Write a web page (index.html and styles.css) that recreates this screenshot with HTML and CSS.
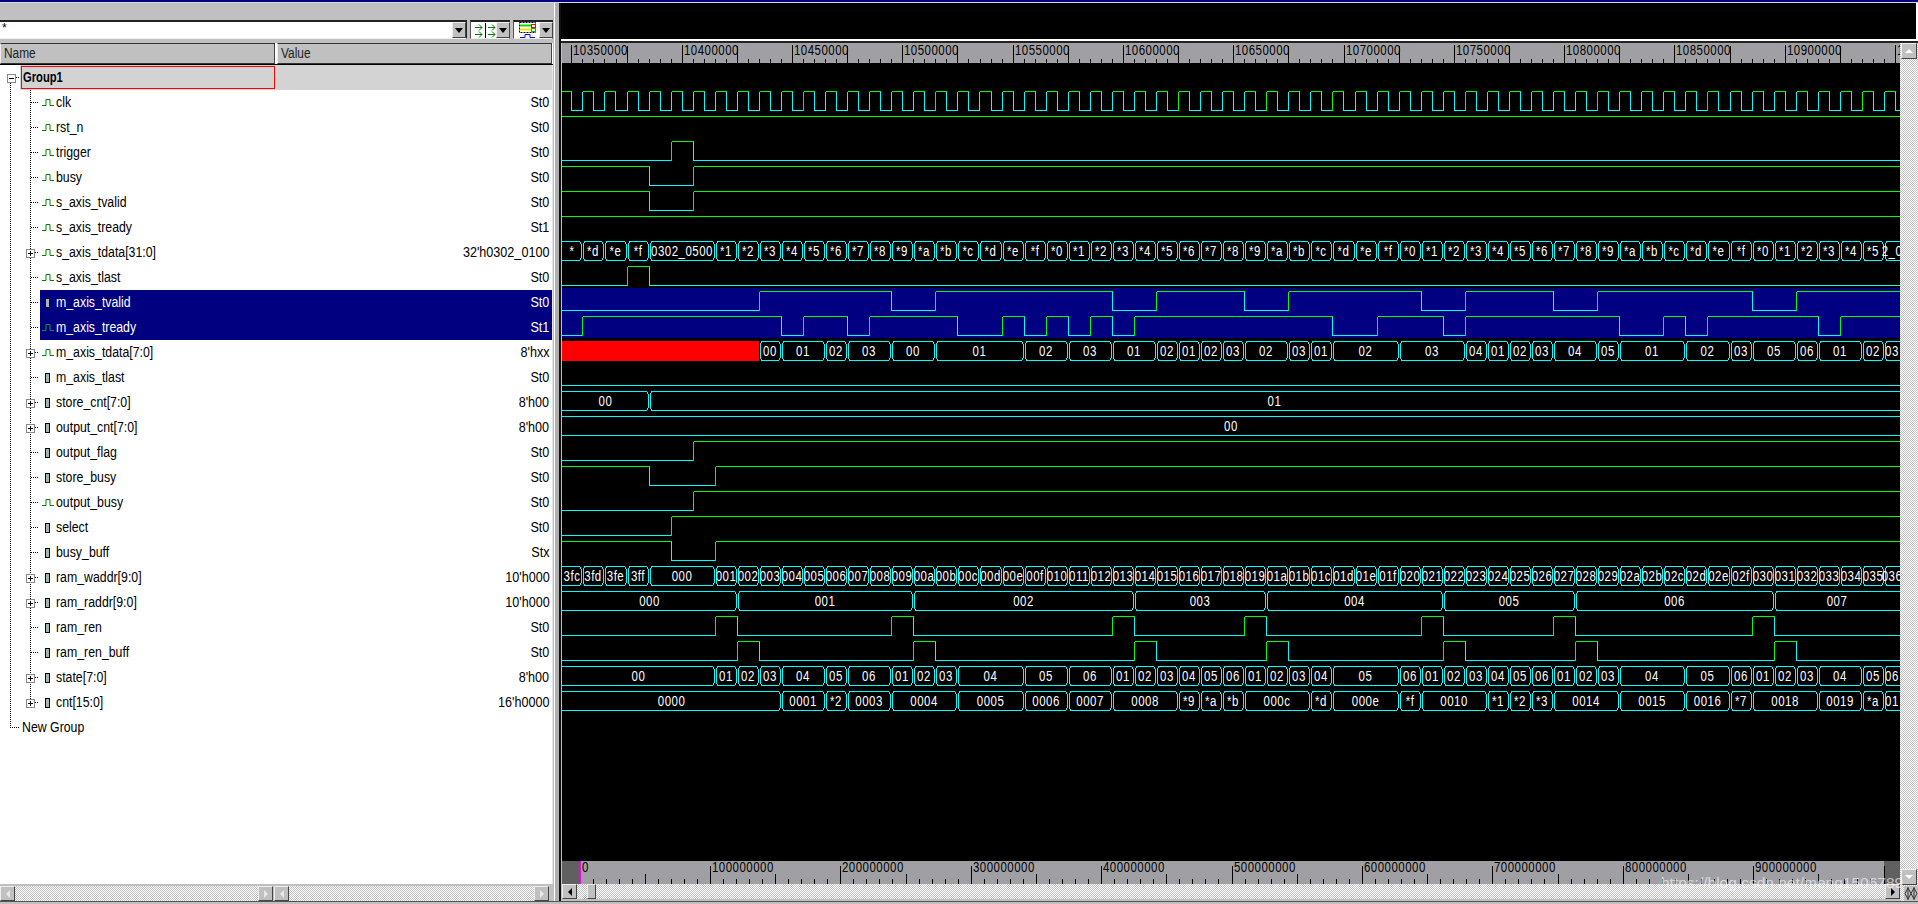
FILE: index.html
```html
<!DOCTYPE html>
<html lang="en">
<head>
<meta charset="utf-8">
<title>Waveform</title>
<link rel="stylesheet" href="styles.css">
</head>
<body>
<svg class="defs" width="0" height="0"><symbol id="pulse" viewBox="0 0 16 12"><path d="M2 8.500H6V2.500H10V8.500H14" fill="none" stroke="currentColor"/></symbol></svg>
<div class="app">
  <div class="titlebar"></div>
  <div class="main">
    <section class="left">
      <div class="lspace"></div>
      <div class="toolbar">
        <div class="combo wide"><span class="filter">*</span><span class="drop"><i class="down"></i></span></div>
        <div class="combo icon">
          <svg class="tool" width="22" height="15" viewBox="0 0 22 15"><g fill="none" stroke="#008000"><path d="M1 4.500H8M5 1.500L8 4.500L5 7.500M1 11.500H8M5 8.500L8 11.500L5 14.500M14 4.500H21M18 1.500L21 4.500L18 7.500M14 11.500H21M18 8.500L21 11.500L18 14.500"/></g><path d="M11.500 0V15" stroke="#000"/></svg>
          <span class="drop"><i class="down"></i></span>
        </div>
        <div class="combo icon last">
          <svg class="tool" width="22" height="16" viewBox="0 0 22 16"><rect x="2.500" y=".5" width="16" height="10" fill="none" stroke="#000" stroke-dasharray="2 1"/><path d="M3 3.500H14" stroke="#00e000" stroke-width="2"/><path d="M3 7.500H14" stroke="#f0e000" stroke-width="2"/><rect x="14.500" y="2.500" width="4" height="3" fill="#fff" stroke="#f00"/><rect x="14.500" y="6.500" width="4" height="3" fill="#fff" stroke="#00c000"/><path d="M3 15.500H8V12.500H13V15.500H18" fill="none" stroke="#0000ff"/></svg>
          <span class="drop"><i class="down"></i></span>
        </div>
      </div>
      <div class="header"><div class="hcell name"><span class="hlabel">Name</span></div><div class="hcell value"><span class="hlabel">Value</span></div></div>
      <div class="tree">
        <span class="vline outer"></span><span class="vline inner"></span>
        <div class="row group"><span class="branch"><i class="exp minus"></i></span><div class="cell"><span class="gname"><span class="glabel">Group1</span></span></div></div>
        <div class="row"><span class="branch"></span><div class="cell"><svg class="ico"><use href="#pulse"/></svg><span class="nm">clk</span><span class="val">St0</span></div></div>
        <div class="row"><span class="branch"></span><div class="cell"><svg class="ico"><use href="#pulse"/></svg><span class="nm">rst_n</span><span class="val">St0</span></div></div>
        <div class="row"><span class="branch"></span><div class="cell"><svg class="ico"><use href="#pulse"/></svg><span class="nm">trigger</span><span class="val">St0</span></div></div>
        <div class="row"><span class="branch"></span><div class="cell"><svg class="ico"><use href="#pulse"/></svg><span class="nm">busy</span><span class="val">St0</span></div></div>
        <div class="row"><span class="branch"></span><div class="cell"><svg class="ico"><use href="#pulse"/></svg><span class="nm">s_axis_tvalid</span><span class="val">St0</span></div></div>
        <div class="row"><span class="branch"></span><div class="cell"><svg class="ico"><use href="#pulse"/></svg><span class="nm">s_axis_tready</span><span class="val">St1</span></div></div>
        <div class="row"><span class="branch"><i class="exp plus"></i></span><div class="cell"><svg class="ico"><use href="#pulse"/></svg><span class="nm">s_axis_tdata[31:0]</span><span class="val">32'h0302_0100</span></div></div>
        <div class="row"><span class="branch"></span><div class="cell"><svg class="ico"><use href="#pulse"/></svg><span class="nm">s_axis_tlast</span><span class="val">St0</span></div></div>
        <div class="row sel"><span class="branch"></span><div class="cell"><span class="box"></span><span class="nm">m_axis_tvalid</span><span class="val">St0</span></div></div>
        <div class="row sel"><span class="branch"></span><div class="cell"><svg class="ico"><use href="#pulse"/></svg><span class="nm">m_axis_tready</span><span class="val">St1</span></div></div>
        <div class="row"><span class="branch"><i class="exp plus"></i></span><div class="cell"><svg class="ico"><use href="#pulse"/></svg><span class="nm">m_axis_tdata[7:0]</span><span class="val">8'hxx</span></div></div>
        <div class="row"><span class="branch"></span><div class="cell"><span class="box"></span><span class="nm">m_axis_tlast</span><span class="val">St0</span></div></div>
        <div class="row"><span class="branch"><i class="exp plus"></i></span><div class="cell"><span class="box"></span><span class="nm">store_cnt[7:0]</span><span class="val">8'h00</span></div></div>
        <div class="row"><span class="branch"><i class="exp plus"></i></span><div class="cell"><span class="box"></span><span class="nm">output_cnt[7:0]</span><span class="val">8'h00</span></div></div>
        <div class="row"><span class="branch"></span><div class="cell"><span class="box"></span><span class="nm">output_flag</span><span class="val">St0</span></div></div>
        <div class="row"><span class="branch"></span><div class="cell"><span class="box"></span><span class="nm">store_busy</span><span class="val">St0</span></div></div>
        <div class="row"><span class="branch"></span><div class="cell"><svg class="ico"><use href="#pulse"/></svg><span class="nm">output_busy</span><span class="val">St0</span></div></div>
        <div class="row"><span class="branch"></span><div class="cell"><span class="box"></span><span class="nm">select</span><span class="val">St0</span></div></div>
        <div class="row"><span class="branch"></span><div class="cell"><span class="box"></span><span class="nm">busy_buff</span><span class="val">Stx</span></div></div>
        <div class="row"><span class="branch"><i class="exp plus"></i></span><div class="cell"><span class="box"></span><span class="nm">ram_waddr[9:0]</span><span class="val">10'h000</span></div></div>
        <div class="row"><span class="branch"><i class="exp plus"></i></span><div class="cell"><span class="box"></span><span class="nm">ram_raddr[9:0]</span><span class="val">10'h000</span></div></div>
        <div class="row"><span class="branch"></span><div class="cell"><span class="box"></span><span class="nm">ram_ren</span><span class="val">St0</span></div></div>
        <div class="row"><span class="branch"></span><div class="cell"><span class="box"></span><span class="nm">ram_ren_buff</span><span class="val">St0</span></div></div>
        <div class="row"><span class="branch"><i class="exp plus"></i></span><div class="cell"><span class="box"></span><span class="nm">state[7:0]</span><span class="val">8'h00</span></div></div>
        <div class="row"><span class="branch"><i class="exp plus"></i></span><div class="cell"><span class="box"></span><span class="nm">cnt[15:0]</span><span class="val">16'h0000</span></div></div>
        <div class="row newgroup"><span class="branch"></span><div class="cell"><span class="nm">New Group</span></div></div>
      </div>
      <div class="lscrolls">
        <div class="scroll first"><span class="btn ghost"><i class="left-arrow"></i></span><span class="track"></span><span class="btn ghost"><i class="right-arrow"></i></span></div>
        <div class="scroll second"><span class="btn ghost"><i class="left-arrow"></i></span><span class="track"></span><span class="btn ghost"><i class="right-arrow"></i></span></div>
      </div>
    </section>
    <div class="split"></div>
    <section class="right">
      <div class="blackbox"></div>
      <div class="wavearea">
        <div class="waves">
          <svg id="topruler" class="ruler-top" width="1338" height="20" viewBox="562 43 1338 20"></svg>
          <svg id="plot" class="plot" width="1338" height="798" viewBox="562 63 1338 798"></svg>
          <svg id="botruler" class="ruler-bot" width="1338" height="23" viewBox="562 861 1338 23"></svg>
          <div class="hscroll"><span class="btn"><i class="left-arrow"></i></span><span class="spacer"></span><span class="thumb"></span><span class="track"></span><span class="btn"><i class="right-arrow"></i></span></div>
        </div>
        <div class="vscroll">
          <span class="btn vbtn ghost"><i class="up-arrow"></i></span>
          <span class="track"></span>
          <span class="btn vbtn ghost"><i class="down-ghost"></i></span>
          <svg class="corner" width="14" height="15" viewBox="0 0 14 15"><path d="M4 2L1 7.500L4 13L7 7.500ZM10 2L7 7.500L10 13L13 7.500Z" fill="none" stroke="#333"/><path d="M4 1V14M10 1V14" stroke="#333"/></svg>
        </div>
      </div>
    </section>
  </div>
  <div class="footer"></div>
  <span class="watermark">https://blog.csdn.net/meng1506789</span>
</div>
<script src="waves.js"></script>
</body>
</html>
```
FILE: styles.css
```css
* { box-sizing: border-box; }
html, body { margin: 0; padding: 0; height: 904px; overflow: hidden; background: #c0c0c0; }
body { font: 14px "Liberation Sans", Arial, sans-serif; color: #000; }
.defs { position: absolute; }
.app { position: relative; display: flex; flex-direction: column; height: 904px; }
.titlebar { height: 3px; background: #000080; border-bottom: 1px solid #d8d8e8; }
.main { display: flex; height: 898px; }
.footer { height: 3px; border-top: 1px solid #555; background: #c0c0c0; }

.left { width: 553px; display: flex; flex-direction: column; }
.lspace { height: 17px; }
.toolbar { display: flex; height: 19px; gap: 3px; }
.combo { position: relative; display: flex; align-items: center; justify-content: space-between; background: #fff; border-top: 2px solid #222; border-left: 1px solid #555; border-right: 1px solid #222; border-bottom: 1px solid #eee; }
.combo.wide { width: 468px; border-left: 0; }
.combo.icon { width: 40px; }
.filter { padding-left: 2px; align-self: flex-start; font-size: 12px; line-height: 12px; }
.tool { margin-left: 3px; flex: none; }
.drop { width: 14px; height: 16px; flex: none; display: flex; align-items: center; justify-content: center; background: #c0c0c0; border-top: 1px solid #eee; border-left: 1px solid #eee; border-right: 1px solid #444; border-bottom: 1px solid #444; }
.down { width: 0; height: 0; border: 4px solid transparent; border-top: 5px solid #000; border-bottom: 0; }

.header { display: flex; margin-top: 4px; height: 22px; gap: 2px; background: #fff; border-bottom: 1px solid #000; }
.hcell { background: #c0c0c0; border-top: 1px solid #333; border-left: 1px solid #eee; border-right: 1px solid #444; border-bottom: 1px solid #333; padding-left: 3px; line-height: 19px; color: #222; }
.hcell.name { width: 275px; }
.hcell.value { width: 275px; }
.hlabel { display: inline-block; transform: scaleX(.85); transform-origin: left center; }

.tree { position: relative; flex: 1; background: #fff; border-right: 1px solid #e4e4e4; }
.vline { position: absolute; width: 1px; background: repeating-linear-gradient(#000 0 1px, transparent 1px 2px); }
.vline.outer { left: 10px; top: 18px; height: 644px; }
.vline.inner { left: 30px; top: 25px; height: 612px; }

.row { position: relative; display: flex; height: 25px; padding-left: 26px; align-items: stretch; line-height: 25px; }
.branch { position: relative; flex: none; width: 14px; display: flex; align-items: center; background: repeating-linear-gradient(90deg, #000 0 1px, transparent 1px 2px) no-repeat 5px 50% / 8px 1px; }
.exp { position: relative; z-index: 1; width: 9px; height: 9px; margin-top: 2px; background-color: #fff; border: 1px solid #888; background-image: linear-gradient(#000, #000); background-repeat: no-repeat; background-position: center; background-size: 5px 1px; }
.exp.plus { background-image: linear-gradient(#000, #000), linear-gradient(#000, #000); background-size: 5px 1px, 1px 5px; }
.cell { flex: 1; display: flex; align-items: center; min-width: 0; }
.ico { flex: none; width: 16px; height: 12px; color: #008000; }
.box { flex: none; width: 5px; height: 10px; margin: 0 6px 0 5px; background: #a3b8b0; border: 1px solid #000; }
.nm { flex: 1; white-space: nowrap; transform: scaleX(.88); transform-origin: left center; }
.val { padding-right: 3px; white-space: nowrap; transform: scaleX(.9); transform-origin: right center; }
.sel .cell { background: #000080; color: #fff; }
.sel .ico { color: #2c8a2c; }
.group { padding-left: 7px; }
.group .branch { width: 13px; background-position: 9px 50%; background-size: 4px 1px; }
.group .cell { background: #d3d3d3; }
.gname { width: 254px; height: 23px; margin-left: 1px; padding-left: 1px; border: 1px solid #f00; line-height: 21px; }
.glabel { display: inline-block; font-weight: bold; transform: scaleX(.8); transform-origin: left center; }
.newgroup { padding-left: 10px; }
.newgroup .branch { width: 12px; background-position: 0 50%; background-size: 10px 1px; }

.lscrolls { display: flex; height: 15px; margin-top: 2px; gap: 1px; }
.scroll { display: flex; }
.scroll.first { width: 273px; }
.scroll.second { width: 275px; }
.track { flex: 1; background: repeating-conic-gradient(#c0c0c0 0 25%, #fff 0 50%) 0 0 / 2px 2px; }
.btn { flex: none; width: 15px; height: 15px; display: flex; align-items: center; justify-content: center; background: #c0c0c0; border-top: 1px solid #eee; border-left: 1px solid #eee; border-right: 1px solid #444; border-bottom: 1px solid #444; }
.left-arrow { width: 0; height: 0; border: 4px solid transparent; border-right: 4px solid #000; border-left: 0; }
.right-arrow { width: 0; height: 0; border: 4px solid transparent; border-left: 4px solid #000; border-right: 0; }
.up-arrow { width: 0; height: 0; border: 4px solid transparent; border-bottom: 4px solid #fff; border-top: 0; }
.down-ghost { width: 0; height: 0; border: 4px solid transparent; border-top: 4px solid #fff; border-bottom: 0; }
.ghost .left-arrow { border-right-color: #e8e8e8; }
.ghost .right-arrow { border-left-color: #e8e8e8; }

.split { width: 8px; background: linear-gradient(90deg, #c0c0c0 0 1px, #fff 1px 2px, #b0b0b0 2px 6px, #111 6px 8px); }

.right { flex: 1; display: flex; flex-direction: column; min-width: 0; background: #fff; }
.blackbox { height: 36px; background: #000; margin-right: 2px; }
.wavearea { display: flex; margin-top: 4px; flex: 1; position: relative; }
.waves { width: 1339px; display: flex; flex-direction: column; background: #c0c0c0; border-left: 1px solid #c0c0c0; }
.waves svg { display: block; flex: none; }
.plot { background: #000; }
.hscroll { display: flex; height: 15px; }
.spacer { width: 10px; background: repeating-conic-gradient(#c0c0c0 0 25%, #fff 0 50%) 0 0 / 2px 2px; }
.thumb { width: 9px; background: #c0c0c0; border-top: 1px solid #eee; border-left: 1px solid #eee; border-right: 1px solid #444; border-bottom: 1px solid #444; }
.vscroll { position: relative; width: 18px; display: flex; flex-direction: column; align-items: flex-start; padding: 0 1px; background: repeating-conic-gradient(#c0c0c0 0 25%, #fff 0 50%) 0 0 / 2px 2px; }
.vscroll .track { background: none; }
.vbtn { width: 16px; height: 16px; }
.corner { flex: none; margin-left: 3px; margin-top: 1px; background: #c0c0c0; }
.wavearea::before { content: ""; position: absolute; left: 0; right: 0; top: -4px; height: 4px; background: linear-gradient(#fff 0 2px, #222 2px 4px); }
.watermark { position: absolute; left: 1661px; top: 874px; font: 15.5px "Liberation Sans", sans-serif; color: rgba(255, 255, 255, .62); white-space: nowrap; }

.r-text { font: 14px "Liberation Sans", sans-serif; letter-spacing: .6px; fill: #000; }
.w-text { font: 14px "Liberation Sans", sans-serif; letter-spacing: .6px; fill: #fff; text-anchor: middle; }
.line { fill: none; stroke-width: 1; shape-rendering: crispEdges; }
.bus { fill: none; stroke: #00ffff; stroke-width: 1; shape-rendering: crispEdges; }
```
FILE: waves.js
```js
(function () {
  var G = '#00ff00', C = '#00ffff', L = 562, R = 1900;
  function X(n) { return Math.round(582.4 + 22.06 * n); }
  function hi(r) { return 66 + 25 * r + 0.5; }
  function lo(r) { return 85 + 25 * r + 0.5; }

  function seg(d, col) { return '<path class="line" stroke="' + col + '" d="' + d + '"/>'; }

  function label(cls, x, y, s) {
    return '<text class="' + cls + '" transform="translate(' + x + ' ' + y + ') scale(.82 1)">' + s + '</text>';
  }

  // greenRises: optional list of rising edges drawn green; all other rises are cyan then
  function digital(row, level, edges, greenRises) {
    var out = '', x = L, h = hi(row), l = lo(row), i, nx, col;
    for (i = 0; i <= edges.length; i++) {
      nx = i < edges.length ? X(edges[i]) + 0.5 : R;
      out += seg('M' + x + ' ' + (level ? h : l) + 'H' + nx, level ? G : C);
      if (i < edges.length) {
        col = level ? C : G;
        if (!level && greenRises && greenRises.indexOf(edges[i]) < 0) col = C;
        out += seg('M' + nx + ' ' + h + 'V' + l, col);
        level = !level;
      }
      x = nx;
    }
    return out;
  }

  function bus(row, items, from) {
    // items: [endN, label]; segment starts where the previous one ended
    var out = '', t = 66 + 25 * row + 0.5, b = t + 19, start = from, i, x0, x1, cx;
    for (i = 0; i < items.length; i++) {
      x0 = start === null ? L - 6 : X(start);
      x1 = items[i][0] === null ? R + 6 : X(items[i][0]);
      out += '<path class="bus" d="M' + (x0 + 2.5) + ' ' + t + 'H' + (x1 - 2.5) + 'L' + (x1 - 0.5) + ' ' + (t + 3) + 'V' + (b - 3) + 'L' + (x1 - 2.5) + ' ' + b + 'H' + (x0 + 2.5) + 'L' + (x0 + 1.5) + ' ' + (b - 3) + 'V' + (t + 3) + 'Z"/>';
      cx = (Math.max(x0, L) + Math.min(x1, R)) / 2;
      if (items[i][2] !== undefined) cx = items[i][2];
      out += label('w-text', cx, t + 14, items[i][1]);
      start = items[i][0];
    }
    return out;
  }

  function spans(list) {
    // "label:end" compact lists
    return list.split(' ').map(function (s) {
      var p = s.split(':');
      return [p[1] === 'e' ? null : +p[1], p[0]];
    });
  }

  var p = '';
  p += '<rect x="562" y="288" width="1338" height="50" fill="#000080"/>';

  var clk = [];
  for (var k = -1; k < 61; k++) { clk.push(k + 0.5); clk.push(k + 1); }
  p += digital(1, true, clk, [10, 16, 27, 31, 34, 40, 46, 51, 58]);
  p += digital(2, true, []);
  p += digital(3, false, [4, 5]);
  p += digital(4, true, [3, 5]);
  p += digital(5, true, [3, 5]);
  p += digital(6, true, []);

  var td = [[0, '*'], [1, '*d'], [2, '*e'], [3, '*f'], [6, '0302_0500']];
  for (var n = 6; n < 59; n++) td.push([n + 1, '*' + ((n - 5) % 16).toString(16)]);
  td.push([null, '2_0', 1892]);
  p += bus(7, td, null);

  p += digital(8, false, [2, 3]);
  p += digital(9, false, [8, 14, 16, 24, 26, 30, 32, 38, 40, 44, 46, 53, 55]);
  p += digital(10, false, [0, 9, 10, 12, 13, 17, 19, 20, 21, 22, 23, 24, 25, 34, 36, 39, 40, 47, 49, 50, 51, 56, 57]);

  p += '<rect x="562" y="341" width="' + (X(8) - 562) + '" height="20" fill="#ff0000"/>';
  p += bus(11, spans('00:9 01:11 02:12 03:14 00:16 01:20 02:22 03:24 01:26 02:27 01:28 02:29 03:30 02:32 03:33 01:34 02:37 03:40 04:41 01:42 02:43 03:44 04:46 05:47 01:50 02:52 03:53 05:55 06:56 01:58 02:59 03:60'), 8);

  p += digital(12, false, []);
  p += bus(13, spans('00:3 01:e'), null);
  p += bus(14, spans('00:e'), null);
  p += digital(15, false, [5]);
  p += digital(16, true, [3, 6]);
  p += digital(17, false, [5]);
  p += digital(18, false, [4]);
  p += digital(19, true, [4, 6]);

  var wa = [[0, '3fc'], [1, '3fd'], [2, '3fe'], [3, '3ff'], [6, '000']];
  for (var m = 6; m < 60; m++) {
    var h = (m - 5).toString(16);
    wa.push([m + 1, ('000' + h).slice(-3)]);
  }
  p += bus(20, wa, null);

  p += bus(21, spans('000:7 001:15 002:25 003:31 004:39 005:45 006:54 007:e'), null);
  p += digital(22, false, [6, 7, 14, 15, 24, 25, 30, 31, 38, 39, 44, 45, 53, 54]);
  p += digital(23, false, [7, 8, 15, 16, 25, 26, 31, 32, 39, 40, 45, 46, 54, 55]);
  p += bus(24, spans('00:6 01:7 02:8 03:9 04:11 05:12 06:14 01:15 02:16 03:17 04:20 05:22 06:24 01:25 02:26 03:27 04:28 05:29 06:30 01:31 02:32 03:33 04:34 05:37 06:38 01:39 02:40 03:41 04:42 05:43 06:44 01:45 02:46 03:47 04:50 05:52 06:53 01:54 02:55 03:56 04:58 05:59 06:60'), null);
  p += bus(25, spans('0000:9 0001:11 *2:12 0003:14 0004:17 0005:20 0006:22 0007:24 0008:27 *9:28 *a:29 *b:30 000c:33 *d:34 000e:37 *f:38 0010:41 *1:42 *2:43 *3:44 0014:47 0015:50 0016:52 *7:53 0018:56 0019:58 *a:59 01:60'), null);
  document.getElementById('plot').innerHTML = p;

  // top ruler
  var t = '<rect x="562" y="43" width="1338" height="20" fill="#a0a0a4"/>';
  var d = '', i, x;
  for (i = -1; i * 11.03 + 571.4 < R; i++) {
    x = Math.round(571.4 + i * 11.03) + 0.5;
    if (i % 10 === 0) d += 'M' + x + ' 45V63';
    else if ((i + 10) % 5 === 0) d += 'M' + x + ' 46V63';
    else d += 'M' + x + ' 59V63';
  }
  t += '<path class="line" stroke="#000" d="' + d + '"/>';
  for (i = 0; i < 13; i++) {
    x = Math.round(571.4 + i * 110.3) + 2;
    t += label('r-text', x, 55, 10350000 + i * 50000);
  }
  document.getElementById('topruler').innerHTML = t;

  // bottom ruler
  var b = '<rect x="562" y="861" width="1338" height="23" fill="#a0a0a4"/>';
  b += '<rect x="562" y="861" width="18" height="23" fill="#606060"/><rect x="1884" y="861" width="16" height="23" fill="#606060"/>';
  d = '';
  for (i = 1; 579.5 + i * 13.04 < 1884; i++) {
    x = Math.round(579.5 + i * 13.04) + 0.5;
    if (i % 10 === 0) d += 'M' + x + ' 866V884';
    else if (i % 5 === 0) d += 'M' + x + ' 874V884';
    else d += 'M' + x + ' 879V884';
  }
  b += '<path class="line" stroke="#000" d="' + d + '"/>';
  b += '<path class="line" stroke="#ff00ff" d="M580.500 861V884"/>';
  for (i = 0; i < 10; i++) {
    x = Math.round(579.5 + i * 130.4) + 2;
    b += label('r-text', x, 872, i === 0 ? '0' : i + '00000000');
  }
  document.getElementById('botruler').innerHTML = b;
})();
```
